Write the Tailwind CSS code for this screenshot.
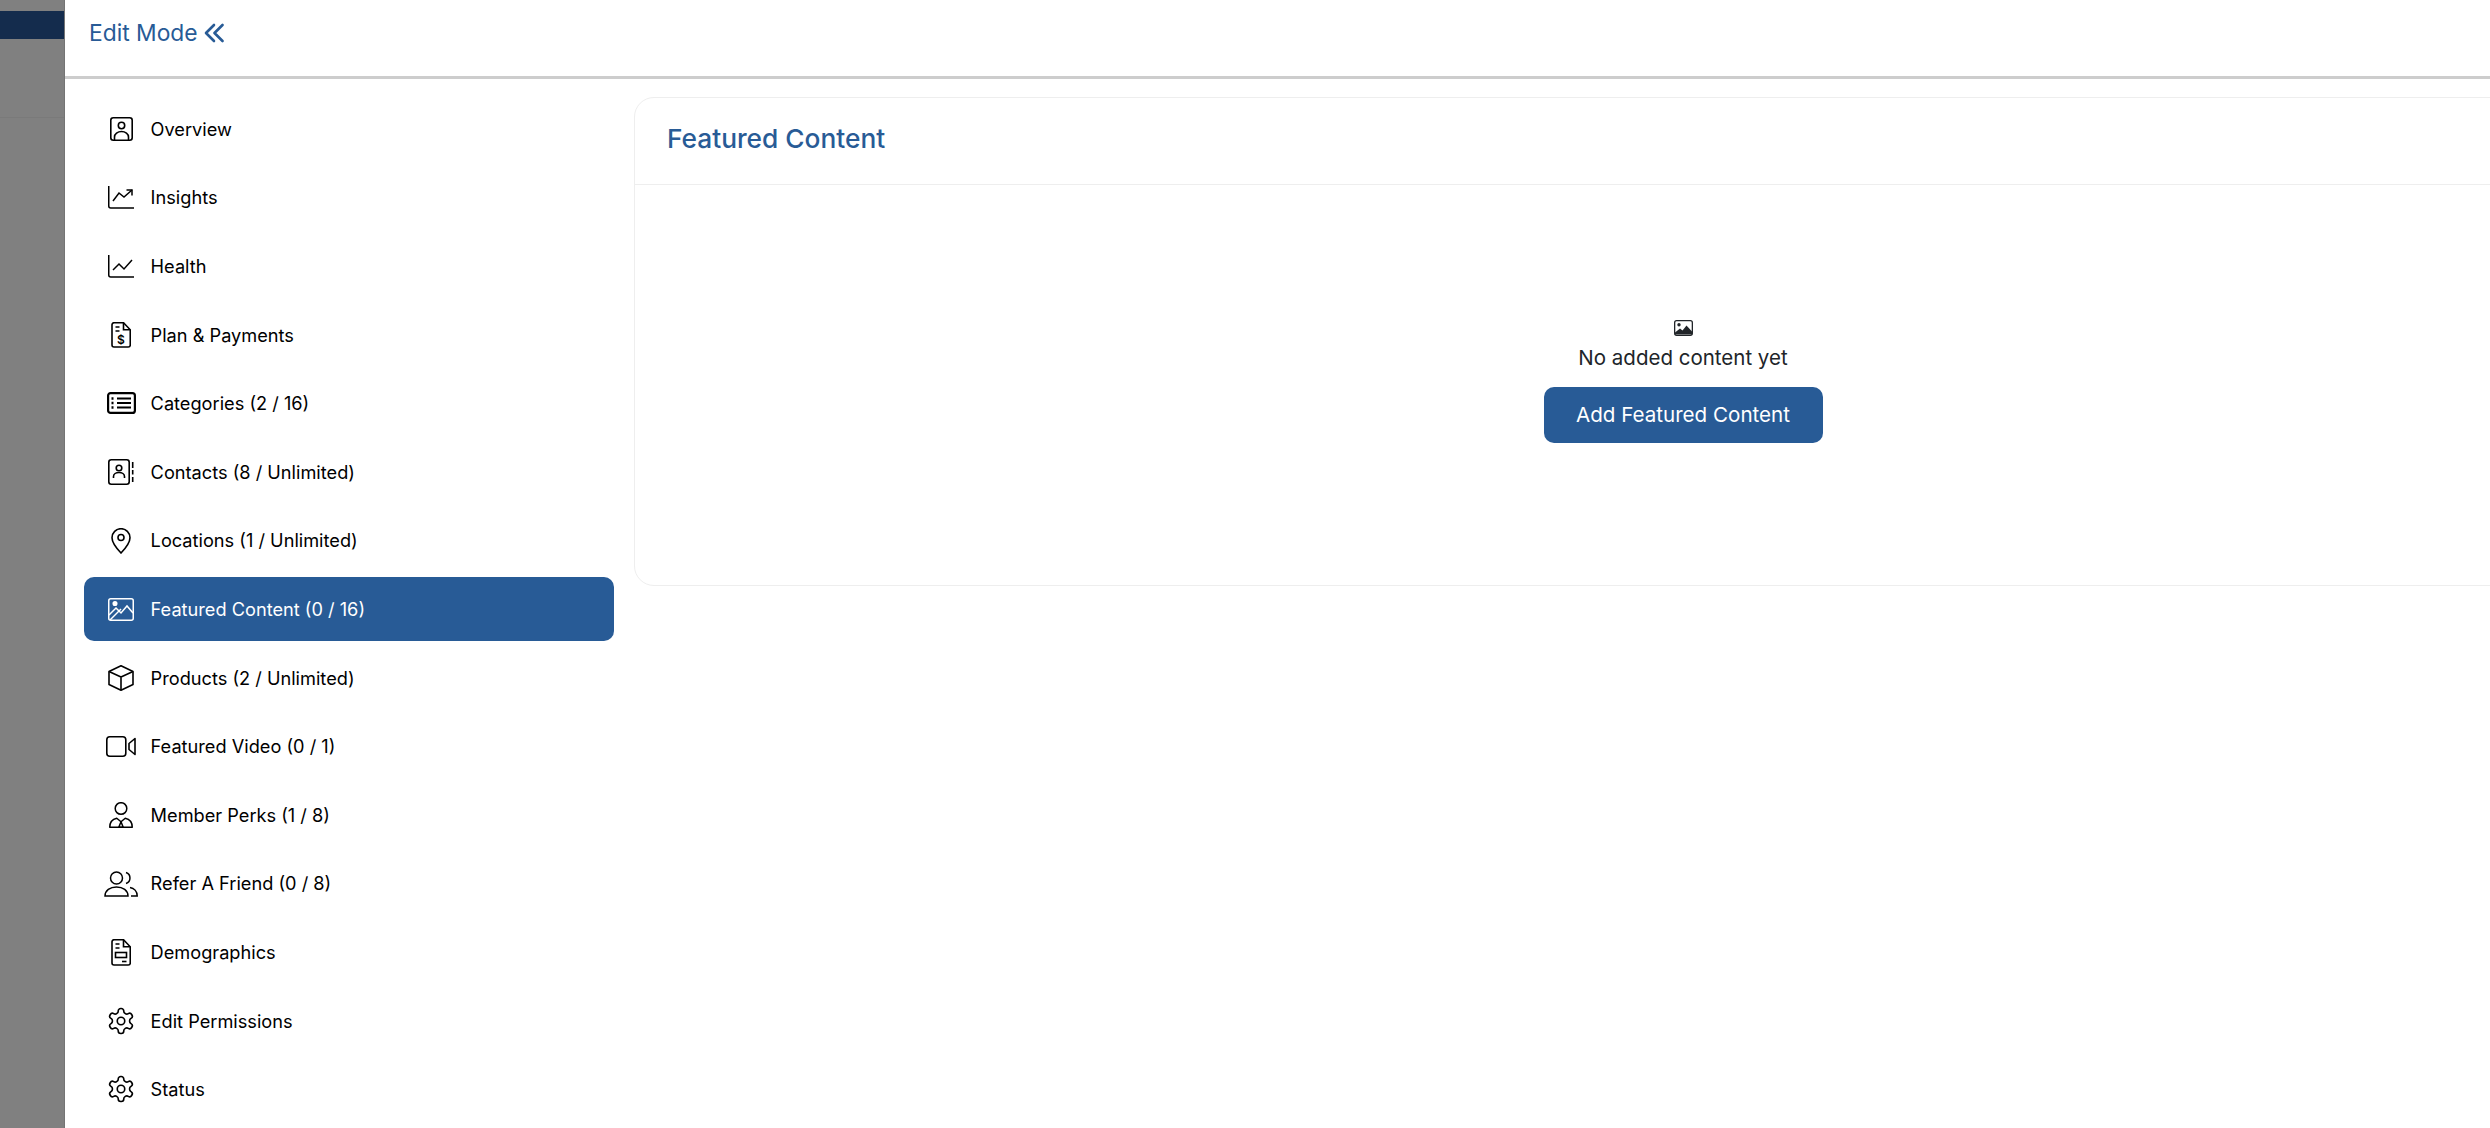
<!DOCTYPE html>
<html lang="en">

<head>
    <meta charset="UTF-8">
    <title>Edit Mode</title>
    <script src="https://cdn.jsdelivr.net/npm/@tailwindcss/browser@4"></script>
</head>

<body class="w-[2490px] h-[1128px] overflow-hidden bg-white font-['Inter',sans-serif] text-black">
    <div class="flex h-full">

        <!-- Backdrop strip -->
        <div class="w-[65px] shrink-0 h-full bg-[#808080] border-r border-[#747474] pt-[11px]">
            <div class="h-[28px] bg-[#142c4d]"></div>
            <div class="mt-[78px] h-px bg-[#7a7a7a]"></div>
        </div>

        <!-- Panel -->
        <div class="flex-1 min-w-0 flex flex-col">

            <!-- Header -->
            <div class="h-[79px] shrink-0 border-b-[3px] border-[#cdcdcd] pl-[24px] pt-[16px]">
                <div class="flex items-center gap-[6px] text-[#285b96] text-[22.8px] leading-[34px]">
                    <span>Edit Mode</span>
                    <svg width="20" height="20" viewBox="0 0 20 20" fill="none" stroke="currentColor" stroke-width="2.6" stroke-linecap="round" stroke-linejoin="round">
                        <path d="M10 2 2 10l8 8" />
                        <path d="M18.5 2l-8 8 8 8" />
                    </svg>
                </div>
            </div>

            <div class="flex flex-1 min-h-0 pt-[18px]">

                <!-- Sidebar nav -->
                <nav class="w-[530px] shrink-0 ml-[19px] flex flex-col gap-[4.6px] text-[18.2px]">

                    <a class="h-[64px] shrink-0 flex items-center rounded-[10px] pl-[20px] gap-[12.6px]">
                        <span class="w-[34px] flex justify-center">
                            <svg width="23" height="24" viewBox="0 0 23 24" fill="none" stroke="currentColor" stroke-width="1.6">
                                <rect x="0.8" y="0.8" width="21.4" height="22.4" rx="2.5" />
                                <circle cx="11.5" cy="8.5" r="3.2" />
                                <path d="M4.5 23v-3a7 5.5 0 0 1 14 0v3" />
                            </svg>
                        </span>
                        <span class="pt-[1px]">Overview</span>
                    </a>

                    <a class="h-[64px] shrink-0 flex items-center rounded-[10px] pl-[20px] gap-[12.6px]">
                        <span class="w-[34px] flex justify-center">
                            <svg width="26" height="23" viewBox="0 0 26 23" fill="none" stroke="currentColor" stroke-width="1.5">
                                <path d="M.75 0v20a2 2 0 0 0 2 2H26" />
                                <path d="M5 15l6-8 5 4 8-7" />
                                <path d="M18.5 4h5.5v5.500" />
                            </svg>
                        </span>
                        <span class="pt-[1px]">Insights</span>
                    </a>

                    <a class="h-[64px] shrink-0 flex items-center rounded-[10px] pl-[20px] gap-[12.6px]">
                        <span class="w-[34px] flex justify-center">
                            <svg width="26" height="23" viewBox="0 0 26 23" fill="none" stroke="currentColor" stroke-width="1.5">
                                <path d="M.75 0v20a2 2 0 0 0 2 2H26" />
                                <path d="M5 15l6-6 5 5 8-9" />
                            </svg>
                        </span>
                        <span class="pt-[1px]">Health</span>
                    </a>

                    <a class="h-[64px] shrink-0 flex items-center rounded-[10px] pl-[20px] gap-[12.6px]">
                        <span class="w-[34px] flex justify-center">
                            <svg width="20" height="26" viewBox="0 0 20 26" fill="none" stroke="currentColor" stroke-width="1.6">
                                <path d="M3 .75h9.5l6.75 7V23a2 2 0 0 1-2 2H3a2 2 0 0 1-2-2V2.75a2 2 0 0 1 2-2z" />
                                <path d="M12.5 .75v7h6.75M4.5 5h4M4.5 9h4" />
                                <text x="10" y="22" text-anchor="middle" font-size="12" font-weight="600" fill="currentColor" stroke="none">$</text>
                            </svg>
                        </span>
                        <span class="pt-[1px]">Plan &amp; Payments</span>
                    </a>

                    <a class="h-[64px] shrink-0 flex items-center rounded-[10px] pl-[20px] gap-[12.6px]">
                        <span class="w-[34px] flex justify-center">
                            <svg width="29" height="22" viewBox="0 0 29 22" fill="none" stroke="currentColor" stroke-width="2.2">
                                <rect x="1.1" y="1.1" width="26.8" height="19.8" rx="2.5" />
                                <path d="M10 6.5h14M10 11h14M10 15.500h14" />
                                <path d="M4.500 6.500h2M4.500 11h2M4.500 15.500h2" stroke-width="2.600" />
                            </svg>
                        </span>
                        <span class="pt-[1px]">Categories (2 / 16)</span>
                    </a>

                    <a class="h-[64px] shrink-0 flex items-center rounded-[10px] pl-[20px] gap-[12.6px]">
                        <span class="w-[34px] flex justify-center">
                            <svg width="26" height="26" viewBox="0 0 26 26" fill="none" stroke="currentColor" stroke-width="1.6">
                                <rect x="0.8" y="0.8" width="20.400" height="24.400" rx="2.500" />
                                <circle cx="11" cy="9" r="2.800" />
                                <path d="M5.500 19v-1.500a5.500 4 0 0 1 11 0V19" />
                                <path d="M24.700 3v6M24.700 11v4.500M24.700 18v5" />
                            </svg>
                        </span>
                        <span class="pt-[1px]">Contacts (8 / Unlimited)</span>
                    </a>

                    <a class="h-[64px] shrink-0 flex items-center rounded-[10px] pl-[20px] gap-[12.6px]">
                        <span class="w-[34px] flex justify-center">
                            <svg width="20" height="26" viewBox="0 0 20 26" fill="none" stroke="currentColor" stroke-width="1.6">
                                <path d="M10 25C10 25 1 15.500 1 9.700a9 9 0 0 1 18 0C19 15.500 10 25 10 25z" />
                                <circle cx="10" cy="9.500" r="3" />
                            </svg>
                        </span>
                        <span class="pt-[1px]">Locations (1 / Unlimited)</span>
                    </a>

                    <a class="h-[64px] shrink-0 flex items-center rounded-[10px] pl-[20px] gap-[12.6px] bg-[#285b96] text-white">
                        <span class="w-[34px] flex justify-center">
                            <svg width="26" height="23" viewBox="0 0 26 23" fill="none" stroke="currentColor" stroke-width="1.500">
                                <rect x="0.750" y="0.750" width="24.500" height="21.500" rx="2" />
                                <circle cx="7" cy="5.500" r="1.800" fill="currentColor" />
                                <path d="M1 17l7-7 5 5 6-7 6 7" />
                                <path d="M2 22l11-11" />
                            </svg>
                        </span>
                        <span class="pt-[1px]">Featured Content (0 / 16)</span>
                    </a>

                    <a class="h-[64px] shrink-0 flex items-center rounded-[10px] pl-[20px] gap-[12.6px]">
                        <span class="w-[34px] flex justify-center">
                            <svg width="26" height="26" viewBox="0 0 26 26" fill="none" stroke="currentColor" stroke-width="1.600" stroke-linejoin="round">
                                <path d="M13 .75 25 6.500v13l-12 5.750L1 19.500v-13z" />
                                <path d="M1 6.500 13 12l12-5.500M13 12v13" />
                            </svg>
                        </span>
                        <span class="pt-[1px]">Products (2 / Unlimited)</span>
                    </a>

                    <a class="h-[64px] shrink-0 flex items-center rounded-[10px] pl-[20px] gap-[12.6px]">
                        <span class="w-[34px] flex justify-center">
                            <svg width="30" height="21" viewBox="0 0 30 21" fill="none" stroke="currentColor" stroke-width="1.600" stroke-linejoin="round">
                                <rect x="0.800" y="0.800" width="19" height="19.400" rx="3" />
                                <path d="M29 2.500l-6 5v6l6 5z" />
                            </svg>
                        </span>
                        <span class="pt-[1px]">Featured Video (0 / 1)</span>
                    </a>

                    <a class="h-[64px] shrink-0 flex items-center rounded-[10px] pl-[20px] gap-[12.6px]">
                        <span class="w-[34px] flex justify-center">
                            <svg width="24" height="26" viewBox="0 0 24 26" fill="none" stroke="currentColor" stroke-width="1.500" stroke-linejoin="round">
                                <circle cx="12" cy="6.500" r="5.800" />
                                <path d="M.75 25.250c0-5 2.500-8 7-9l4.250 3.500 4.250-3.500c4.500 1 7 4 7 9z" />
                                <path d="M12 19.750l-2.200 5.500h4.400z" />
                            </svg>
                        </span>
                        <span class="pt-[1px]">Member Perks (1 / 8)</span>
                    </a>

                    <a class="h-[64px] shrink-0 flex items-center rounded-[10px] pl-[20px] gap-[12.6px]">
                        <span class="w-[34px] flex justify-center">
                            <svg width="34" height="26" viewBox="0 0 34 26" fill="none" stroke="currentColor" stroke-width="1.500">
                                <circle cx="12.500" cy="7" r="6" />
                                <path d="M22 1.500a5.800 5.800 0 0 1 0 11" />
                                <path d="M1 25c0-5.500 5-9 11.500-9S24 19.500 24 25z" />
                                <path d="M26 16.500c4 .8 7.200 4 7.200 8.500H27" />
                            </svg>
                        </span>
                        <span class="pt-[1px]">Refer A Friend (0 / 8)</span>
                    </a>

                    <a class="h-[64px] shrink-0 flex items-center rounded-[10px] pl-[20px] gap-[12.6px]">
                        <span class="w-[34px] flex justify-center">
                            <svg width="20" height="27" viewBox="0 0 20 27" fill="none" stroke="currentColor" stroke-width="1.600">
                                <path d="M3 .75h9.500l6.750 7V24a2 2 0 0 1-2 2H3a2 2 0 0 1-2-2V2.750a2 2 0 0 1 2-2z" />
                                <path d="M12.500 .75v7h6.750M4.500 5h4M4.500 9h4" />
                                <rect x="4.500" y="13.500" width="11" height="5" />
                                <path d="M11 22.500h4.500" />
                            </svg>
                        </span>
                        <span class="pt-[1px]">Demographics</span>
                    </a>

                    <a class="h-[64px] shrink-0 flex items-center rounded-[10px] pl-[20px] gap-[12.6px]">
                        <span class="w-[34px] flex justify-center">
                            <svg width="30" height="30" viewBox="0 0 24 24" fill="none" stroke="currentColor" stroke-width="1.300">
                                <path d="M12.22 2h-.44a2 2 0 0 0-2 2v.18a2 2 0 0 1-1 1.730l-.43.25a2 2 0 0 1-2 0l-.15-.08a2 2 0 0 0-2.730.73l-.22.38a2 2 0 0 0 .73 2.730l.15.1a2 2 0 0 1 1 1.720v.51a2 2 0 0 1-1 1.740l-.15.09a2 2 0 0 0-.73 2.730l.22.38a2 2 0 0 0 2.730.73l.15-.08a2 2 0 0 1 2 0l.43.25a2 2 0 0 1 1 1.730V20a2 2 0 0 0 2 2h.44a2 2 0 0 0 2-2v-.18a2 2 0 0 1 1-1.730l.43-.25a2 2 0 0 1 2 0l.15.08a2 2 0 0 0 2.730-.73l.22-.39a2 2 0 0 0-.73-2.730l-.15-.08a2 2 0 0 1-1-1.740v-.5a2 2 0 0 1 1-1.740l.15-.09a2 2 0 0 0 .73-2.730l-.22-.38a2 2 0 0 0-2.730-.73l-.15.08a2 2 0 0 1-2 0l-.43-.25a2 2 0 0 1-1-1.730V4a2 2 0 0 0-2-2z" />
                                <circle cx="12" cy="12" r="3" />
                            </svg>
                        </span>
                        <span class="pt-[1px]">Edit Permissions</span>
                    </a>

                    <a class="h-[64px] shrink-0 flex items-center rounded-[10px] pl-[20px] gap-[12.6px]">
                        <span class="w-[34px] flex justify-center">
                            <svg width="30" height="30" viewBox="0 0 24 24" fill="none" stroke="currentColor" stroke-width="1.300">
                                <path d="M12.22 2h-.44a2 2 0 0 0-2 2v.18a2 2 0 0 1-1 1.730l-.43.25a2 2 0 0 1-2 0l-.15-.08a2 2 0 0 0-2.730.73l-.22.38a2 2 0 0 0 .73 2.730l.15.1a2 2 0 0 1 1 1.720v.51a2 2 0 0 1-1 1.740l-.15.09a2 2 0 0 0-.73 2.730l.22.38a2 2 0 0 0 2.730.73l.15-.08a2 2 0 0 1 2 0l.43.25a2 2 0 0 1 1 1.730V20a2 2 0 0 0 2 2h.44a2 2 0 0 0 2-2v-.18a2 2 0 0 1 1-1.730l.43-.25a2 2 0 0 1 2 0l.15.08a2 2 0 0 0 2.730-.73l.22-.39a2 2 0 0 0-.73-2.730l-.15-.08a2 2 0 0 1-1-1.740v-.5a2 2 0 0 1 1-1.740l.15-.09a2 2 0 0 0 .73-2.730l-.22-.38a2 2 0 0 0-2.730-.73l-.15.08a2 2 0 0 1-2 0l-.43-.25a2 2 0 0 1-1-1.730V4a2 2 0 0 0-2-2z" />
                                <circle cx="12" cy="12" r="3" />
                            </svg>
                        </span>
                        <span class="pt-[1px]">Status</span>
                    </a>
                </nav>

                <!-- Card, runs past the right edge of the window -->
                <div class="w-[2098px] shrink-0 ml-[20px] h-[489px] rounded-[20px] border border-[#eeeeee]">
                    <div class="h-[87px] border-b border-[#eeeeee] pl-[32px] pb-[5px] flex items-center">
                        <h2 class="text-[26.3px] font-medium text-[#285b96]">Featured Content</h2>
                    </div>
                    <div class="flex flex-col items-center pt-[135px]">
                        <svg width="19" height="16" viewBox="0 0 19 16" fill="none" stroke="#212529" stroke-width="1.300">
                            <rect x="0.650" y="0.650" width="17.700" height="14.700" rx="2" />
                            <circle cx="5" cy="4.800" r="1.700" fill="#212529" stroke="none" />
                            <path d="M1 14.500v-2l5-4 2.500 2 4-5 5.500 6v3z" fill="#212529" stroke="none" />
                        </svg>
                        <p class="mt-[7px] text-[20.5px] leading-[30px] text-[#212529]">No added content yet</p>
                        <button class="mt-[14px] w-[279px] h-[56px] rounded-[10px] bg-[#285b96] text-white text-[20.6px]">Add Featured Content</button>
                    </div>
                </div>
            </div>
        </div>
    </div>
</body>

</html>
